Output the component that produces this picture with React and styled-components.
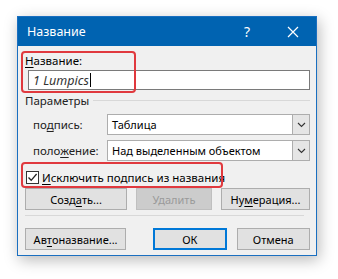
import React from "react";
import styled, { createGlobalStyle } from "styled-components";

const GlobalStyle = createGlobalStyle`
    html, body {
        margin: 0;
        padding: 0;
        background: #FFF;
    }
    body {
        font-family: "Noto Sans", "Open Sans", sans-serif;
        font-size: 11px;
        color: #000;
    }
`

const Page = styled.div`
    width: 338px;
    height: 279px;
    padding: 16px 0 0 17px;
    box-sizing: border-box;
`

const Dialog = styled.div`
    width: 300px;
    height: 240px;
    box-sizing: border-box;
    border: 1px solid #1a6fc0;
    background-color: #F0F0F0;
    box-shadow: 2px 4px 14px rgba(0, 0, 0, 0.28);
    display: flex;
    flex-direction: column;
`

const TitleBar = styled.div`
    height: 29px;
    background-color: #0063B1;
    color: #FFF;
    display: flex;
    align-items: center;
    padding-left: 9px;
    font-size: 12.5px;
`

const TitleText = styled.span`
    flex: 1;
`

const TitleButton = styled.div`
    width: 46px;
    height: 29px;
    display: flex;
    align-items: center;
    justify-content: center;
    font-size: 14px;
`

const Body = styled.div`
    padding: 5px 6px 0 7px;
    display: flex;
    flex-direction: column;
`

const Group = styled.div`
    position: relative;
    display: flex;
    flex-direction: column;
`

const Highlight = styled.div`
    position: absolute;
    left: ${p => p.$left}px;
    top: ${p => p.$top}px;
    width: ${p => p.$width}px;
    height: ${p => p.$height}px;
    border: 2px solid #E0393E;
    border-radius: 4px;
    box-sizing: border-box;
    pointer-events: none;
`

const Label = styled.div`
    height: 18px;
    line-height: 18px;
    padding-top: 1px;
    font-size: 11.5px;
`

const Key = styled.span`
    text-decoration: underline;
    text-underline-offset: 2px;
`

const TextInput = styled.div`
    margin: 0 0 0 3px;
    height: 20px;
    box-sizing: border-box;
    border: 1px solid #7A7A7A;
    background: #FFF;
    display: flex;
    align-items: center;
    padding-left: 4px;
    font-style: italic;
    font-size: 12.5px;
    color: #333;
`

const Caret = styled.span`
    display: inline-block;
    width: 1px;
    height: 14px;
    background: #000;
    margin-left: 1px;
`

const SectionHeader = styled.div`
    display: flex;
    align-items: center;
    gap: 4px;
    height: 18px;
    margin-top: 1px;
    color: #222;
    font-size: 11.5px;
`

const Rule = styled.div`
    flex: 1;
    height: 1px;
    background: #D8D8D8;
`

const FieldRow = styled.div`
    display: flex;
    align-items: center;
    height: 21px;
    margin-top: ${p => p.$top}px;
    padding-left: 8px;
`

const FieldLabel = styled.div`
    width: 74px;
    color: #222;
    font-size: 11.5px;
`

const Select = styled.div`
    flex: 1;
    height: 21px;
    box-sizing: border-box;
    border: 1px solid #ADADAD;
    background: #FFF;
    display: flex;
    align-items: center;
`

const SelectValue = styled.div`
    flex: 1;
    padding-left: 4px;
`

const SelectArrow = styled.div`
    width: 16px;
    height: 19px;
    background: #E5E5E5;
    border-left: 1px solid #ADADAD;
    display: flex;
    align-items: center;
    justify-content: center;
`

const CheckRow = styled.div`
    display: flex;
    align-items: center;
    gap: 3px;
    height: 19px;
    margin-top: 7px;
    padding-left: 1px;
    font-size: 11.5px;
`

const Box = styled.div`
    width: 13px;
    height: 13px;
    box-sizing: border-box;
    border: 1px solid #333;
    background: #FFF;
    display: flex;
    align-items: center;
    justify-content: center;
`

const ButtonRow = styled.div`
    display: flex;
    margin-top: ${p => p.$top}px;
`

const Button = styled.div`
    width: ${p => p.$width}px;
    margin-left: ${p => p.$gap || 0}px;
    height: 22px;
    box-sizing: border-box;
    border: ${p => p.$default ? "2px solid #0078D7" : p.$disabled ? "1px solid #BFBFBF" : "1px solid #ADADAD"};
    background: ${p => p.$disabled ? "#CCCCCC" : "#E1E1E1"};
    color: ${p => p.$disabled ? "#9A9A9A" : "#000"};
    display: flex;
    align-items: center;
    justify-content: center;
`

const Separator = styled.div`
    height: 1px;
    background: #D8D8D8;
    margin: 5px 6px 0 0;
`

function Chevron() {
    return (
        <svg width="9" height="6" viewBox="0 0 9 6">
            <path d="M1 1 L4.5 4.5 L8 1" fill="none" stroke="#333" strokeWidth="1.1" />
        </svg>
    )
}

function Check() {
    return (
        <svg width="11" height="11" viewBox="0 0 11 11">
            <path d="M1.5 5.5 L4.2 8.3 L9.6 2" fill="none" stroke="#222" strokeWidth="1.3" />
        </svg>
    )
}

function Close() {
    return (
        <svg width="12" height="12" viewBox="0 0 12 12">
            <path d="M1 1 L11 11 M11 1 L1 11" stroke="#FFF" strokeWidth="1.2" />
        </svg>
    )
}

export default function App() {
    return (
        <Page>
            <GlobalStyle />
            <Dialog>
                <TitleBar>
                    <TitleText>Название</TitleText>
                    <TitleButton>?</TitleButton>
                    <TitleButton>
                        <Close />
                    </TitleButton>
                </TitleBar>

                <Body>
                    <Group>
                        <Label><Key>Н</Key>азвание:</Label>
                        <TextInput>
                            1 Lumpics<Caret />
                        </TextInput>
                        <Highlight $left={-4} $top={0} $width={115} $height={42} />
                    </Group>

                    <SectionHeader>
                        Параметры
                        <Rule />
                    </SectionHeader>

                    <FieldRow $top={5}>
                        <FieldLabel>по<Key>д</Key>пись:</FieldLabel>
                        <Select>
                            <SelectValue>Таблица</SelectValue>
                            <SelectArrow><Chevron /></SelectArrow>
                        </Select>
                    </FieldRow>

                    <FieldRow $top={5}>
                        <FieldLabel>поло<Key>ж</Key>ение:</FieldLabel>
                        <Select>
                            <SelectValue>Над выделенным объектом</SelectValue>
                            <SelectArrow><Chevron /></SelectArrow>
                        </Select>
                    </FieldRow>

                    <Group>
                        <CheckRow>
                            <Box><Check /></Box>
                            <span><Key>И</Key>сключить подпись из названия</span>
                        </CheckRow>
                        <Highlight $left={-4} $top={1} $width={202} $height={26} />
                    </Group>

                    <ButtonRow $top={1}>
                        <Button $width={102}>Созд<Key>а</Key>ть...</Button>
                        <Button $width={76} $gap={9} $disabled>Удалить</Button>
                        <Button $width={89} $gap={9}>Ну<Key>м</Key>ерация...</Button>
                    </ButtonRow>

                    <Separator />

                    <ButtonRow $top={12}>
                        <Button $width={102}>Ав<Key>т</Key>оназвание...</Button>
                        <Button $width={74} $gap={27} $default>ОК</Button>
                        <Button $width={74} $gap={10}>Отмена</Button>
                    </ButtonRow>
                </Body>
            </Dialog>
        </Page>
    )
}
